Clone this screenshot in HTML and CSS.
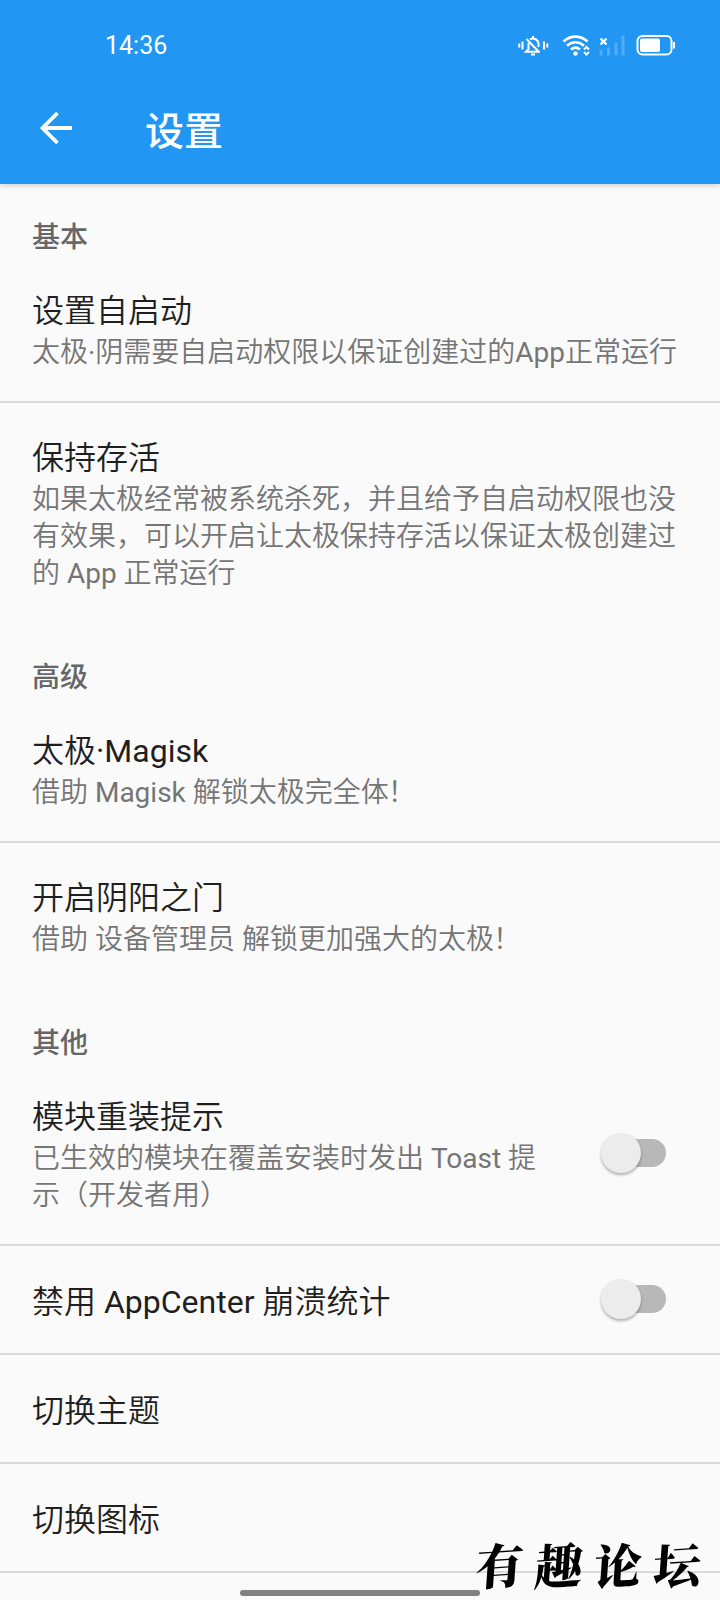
FILE: index.html
```html
<!DOCTYPE html>
<html lang="zh-CN">
<head>
<meta charset="utf-8">
<title>设置</title>
<link rel="stylesheet" href="styles.css">
</head>
<body>
<div class="screen">
  <header class="top">
    <div class="status">
      <span class="clock">14:36</span>
      <svg class="status-icons" width="160" height="26" viewBox="0 0 160 26" fill="none" stroke="#fff" stroke-width="2">
        <path d="M1.200 10.500v4M4.500 8.500v8M26 8.500v8M29.300 10.500v4"/>
        <path d="M10.500 10v6l-2.500 2.800h12.500M20.500 14v-3a5.500 5.500 0 0 0-8.500-4.500M15 3v2.500M13 21.500h4M8.500 6l13 13.500"/>
        <path d="M45.500 8.500c7-6.500 17-6.500 24 0M49 12.700c5-4.600 12-4.600 17 0M53 16.500c3-2.500 6-2.500 9 0" stroke-width="2.600"/>
        <circle cx="57.500" cy="20.500" r="2.200" fill="#fff" stroke="none"/>
        <path d="M66 16.500l2.500-2.500l2.500 2.500M66 19l2.500 2.500l2.500-2.500" stroke-width="2"/>
        <path d="M82.500 5.500l6 6M88.500 5.500l-6 6" stroke-width="2.400"/>
        <path d="M83 22.500v-5M90.500 22.500v-8M98 22.500v-13M105 22.500v-20" stroke-width="3" opacity=".22"/>
        <rect x="119.500" y="3" width="34" height="18.500" rx="5"/>
        <rect x="122" y="5.500" width="20" height="13.500" rx="2" fill="#fff" stroke="none"/>
        <path d="M156 9v6.500"/>
      </svg>
    </div>
    <div class="bar">
      <svg class="back" width="34" height="34" viewBox="0 0 34 34" fill="none" stroke="#fff" stroke-width="3.800"><path d="M18.500 2L3.500 17l15 15M3.500 17H33"/></svg>
      <h1 class="heading">设置</h1>
    </div>
  </header>
  <main class="list">
    <h2 class="section first">基本</h2>
    <div class="item ruled">
      <div class="body"><div class="title">设置自启动</div><div class="summary">太极·阴需要自启动权限以保证创建过的App正常运行</div></div>
    </div>
    <div class="item">
      <div class="body"><div class="title">保持存活</div><div class="summary">如果太极经常被系统杀死，并且给予自启动权限也没<br>有效果，可以开启让太极保持存活以保证太极创建过<br>的 App 正常运行</div></div>
    </div>
    <h2 class="section">高级</h2>
    <div class="item ruled">
      <div class="body"><div class="title">太极·Magisk</div><div class="summary">借助 Magisk 解锁太极完全体<span class="mark">！</span></div></div>
    </div>
    <div class="item">
      <div class="body"><div class="title">开启阴阳之门</div><div class="summary">借助 设备管理员 解锁更加强大的太极<span class="mark">！</span></div></div>
    </div>
    <h2 class="section">其他</h2>
    <div class="item ruled">
      <div class="body"><div class="title">模块重装提示</div><div class="summary">已生效的模块在覆盖安装时发出 Toast 提<br>示（开发者用）</div></div>
      <div class="switch raised"><div class="thumb"></div></div>
    </div>
    <div class="item ruled single">
      <div class="body"><div class="title">禁用 AppCenter 崩溃统计</div></div>
      <div class="switch"><div class="thumb"></div></div>
    </div>
    <div class="item ruled single"><div class="body"><div class="title">切换主题</div></div></div>
    <div class="item ruled single"><div class="body"><div class="title">切换图标</div></div></div>
  </main>
  <div class="home-pill"></div>
  <div class="watermark"><span>有</span><span>趣</span><span>论</span><span>坛</span></div>
</div>
</body>
</html>
```

FILE: styles.css
```css
body { margin: 0; }
.screen {
  position: relative;
  width: 720px;
  height: 1600px;
  overflow: hidden;
  background: #fafafa;
  font-family: Roboto, "Noto Sans CJK SC", sans-serif;
}
.top {
  height: 184px;
  background: #2196f3;
  color: #fff;
  box-shadow: 0 1px 6px rgba(0, 0, 0, .2);
}
.status {
  display: flex;
  justify-content: space-between;
  align-items: center;
  height: 90px;
  padding: 1px 42px 0 105px;
  box-sizing: border-box;
}
.clock { font-size: 25px; line-height: 30px; padding-top: 1px; }
.bar { display: flex; align-items: center; height: 76px; padding-left: 39px; }
.heading { margin: 7px 0 0 72px; font-size: 39px; font-weight: 500; line-height: 50px; }
.section {
  margin: 0;
  height: 74px;
  padding: 37px 32px 0;
  box-sizing: border-box;
  font-size: 28px;
  font-weight: 500;
  line-height: 37px;
  color: #666;
}
.section.first { height: 72px; padding-top: 35px; }
.item { display: flex; align-items: center; padding: 34px 54px 30px 32px; }
.ruled { border-bottom: 2px solid #dadada; }
.body { flex: 1; }
.title { font-family: Roboto, "Noto Sans CJK SC DemiLight", "Noto Sans CJK SC", sans-serif; font-size: 32px; line-height: 42px; color: #1f1f1f; font-weight: 400; white-space: nowrap; }
.summary { margin-top: 2px; font-family: Roboto, "Noto Sans CJK SC DemiLight", "Noto Sans CJK SC", sans-serif; font-size: 28px; line-height: 37px; color: #757575; white-space: nowrap; font-weight: 400; }
.mark { margin-left: -1px; }
.single { height: 107px; padding-top: 0; padding-bottom: 0; }
.single .title { padding-top: 4px; }
.switch {
  display: flex;
  align-items: center;
  width: 60px;
  height: 28px;
  margin-bottom: 2px;
  border-radius: 14px;
  background: #b8b8b8;
}
.switch.raised { margin-bottom: 4px; }
.thumb {
  flex: none;
  width: 40px;
  height: 40px;
  margin-left: -5px;
  border-radius: 50%;
  background: #ececec;
  box-shadow: 0 2px 3px rgba(0, 0, 0, .3);
}
.home-pill {
  position: absolute;
  left: 240px;
  top: 1590px;
  width: 240px;
  height: 6px;
  border-radius: 3px;
  background: #808080;
}
.watermark {
  position: absolute;
  left: 476px;
  top: 1529px;
  display: flex;
  gap: 11px;
  font-family: "Noto Serif CJK SC", "Noto Sans CJK SC", serif;
  font-size: 48px;
  font-weight: 900;
  line-height: 70px;
  color: #000;
  white-space: nowrap;
}
.watermark span { transform: rotate(-4deg) skewX(-8deg); }
```
